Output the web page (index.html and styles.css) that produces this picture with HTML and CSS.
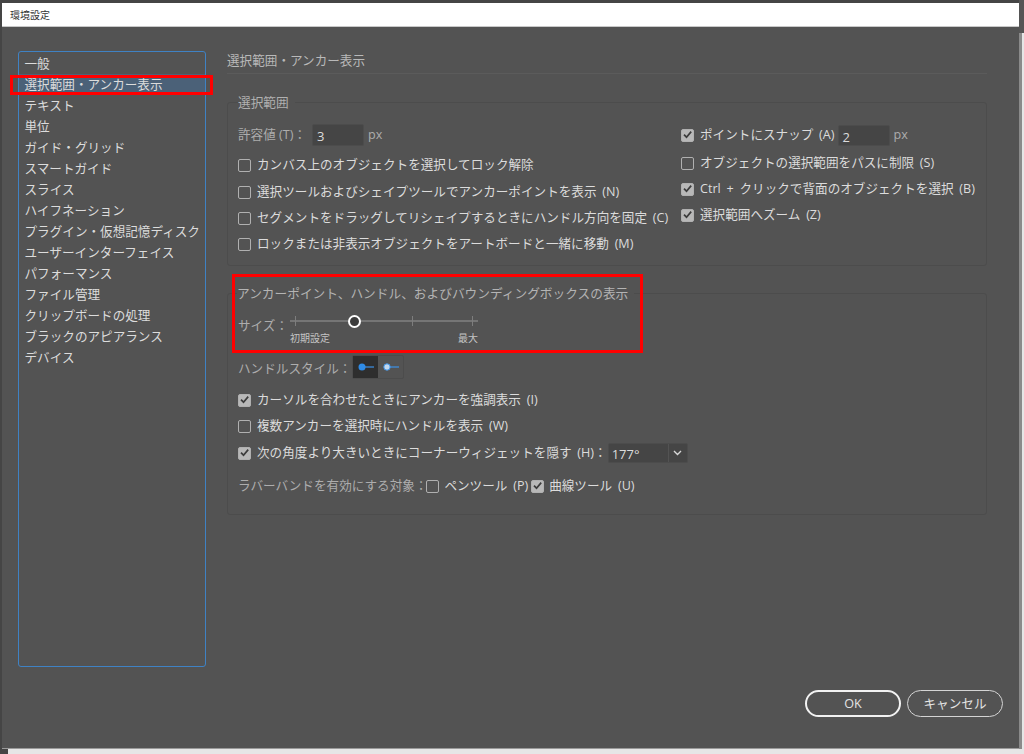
FILE: index.html
```html
<!DOCTYPE html>
<html lang="ja">
<head>
<meta charset="utf-8">
<title>環境設定</title>
<link rel="stylesheet" href="styles.css">
</head>
<body>
<svg class="defs" width="0" height="0" aria-hidden="true"><defs>
<symbol id="tick" viewBox="0 0 13 13"><path d="M3 6.7 5.5 9.2 10.2 3.6" fill="none" stroke="#3c3c3c" stroke-width="1.7"/></symbol>
</defs></svg>
<div class="desk">
  <div class="window">
    <div class="titlebar">環境設定</div>
    <div class="content">
      <div class="top">
        <ul class="sidebar">
          <li>一般</li>
          <li class="selected">選択範囲・アンカー表示</li>
          <li>テキスト</li>
          <li>単位</li>
          <li>ガイド・グリッド</li>
          <li>スマートガイド</li>
          <li>スライス</li>
          <li>ハイフネーション</li>
          <li>プラグイン・仮想記憶ディスク</li>
          <li>ユーザーインターフェイス</li>
          <li>パフォーマンス</li>
          <li>ファイル管理</li>
          <li>クリップボードの処理</li>
          <li>ブラックのアピアランス</li>
          <li>デバイス</li>
        </ul>
        <div class="main">
          <div class="heading">選択範囲・アンカー表示</div>
          <section class="group first">
            <div class="legend">選択範囲</div>
            <div class="columns">
              <div class="col-left">
                <div class="row field-row">
                  <span class="dim tol-label">許容値 (T)：</span>
                  <span class="input tol">3</span>
                  <span class="dim unit">px</span>
                </div>
                <div class="row gap6"><span class="box"></span><span>カンバス上のオブジェクトを選択してロック解除</span></div>
                <div class="row gap1"><span class="box"></span><span>選択ツールおよびシェイプツールでアンカーポイントを表示 (N)</span></div>
                <div class="row"><span class="box"></span><span>セグメントをドラッグしてリシェイプするときにハンドル方向を固定 (C)</span></div>
                <div class="row"><span class="box"></span><span>ロックまたは非表示オブジェクトをアートボードと一緒に移動 (M)</span></div>
              </div>
              <div class="col-right">
                <div class="row field-row"><span class="box on"><svg><use href="#tick"/></svg></span><span>ポイントにスナップ (A)</span><span class="input snap">2</span><span class="dim unit">px</span></div>
                <div class="row gap4"><span class="box"></span><span>オブジェクトの選択範囲をパスに制限 (S)</span></div>
                <div class="row"><span class="box on"><svg><use href="#tick"/></svg></span><span>Ctrl + クリックで背面のオブジェクトを選択 (B)</span></div>
                <div class="row"><span class="box on"><svg><use href="#tick"/></svg></span><span>選択範囲へズーム (Z)</span></div>
              </div>
            </div>
          </section>
          <section class="group second">
            <div class="legend">アンカーポイント、ハンドル、およびバウンディングボックスの表示</div>
            <div class="size-row">
              <span class="dim size-label">サイズ：</span>
              <div class="slider">
                <div class="track">
                  <i class="tick t1"></i><i class="tick t2"></i><i class="tick t3"></i>
                  <i class="thumb"></i>
                </div>
                <div class="scale"><span>初期設定</span><span>最大</span></div>
              </div>
            </div>
            <div class="handle-row">
              <span class="dim">ハンドルスタイル：</span>
              <div class="seg">
                <span class="seg-btn active"><svg width="16" height="8" viewBox="0 0 16 8"><circle cx="4" cy="4" r="3.5" fill="#2f8be6"/><path d="M7 4h9" stroke="#3d93e8" stroke-width="1.2"/></svg></span>
                <span class="seg-btn"><svg width="16" height="8" viewBox="0 0 16 8"><circle cx="4" cy="4" r="3.2" fill="#c3d8ee" stroke="#3d93e8"/><path d="M7 4h9" stroke="#3d93e8" stroke-width="1.2"/></svg></span>
              </div>
            </div>
            <div class="row r-hover"><span class="box on"><svg><use href="#tick"/></svg></span><span>カーソルを合わせたときにアンカーを強調表示 (I)</span></div>
            <div class="row"><span class="box"></span><span>複数アンカーを選択時にハンドルを表示 (W)</span></div>
            <div class="row r-angle"><span class="box on"><svg><use href="#tick"/></svg></span><span>次の角度より大きいときにコーナーウィジェットを隠す (H)：</span>
              <span class="combo"><span class="combo-val">177°</span><span class="combo-arrow"><svg width="9" height="6" viewBox="0 0 9 6"><path d="M1 1l3.5 3.5L8 1" fill="none" stroke="#d8d8d8" stroke-width="1.4"/></svg></span></span>
            </div>
            <div class="row r-rubber">
              <span class="dim rubber-label">ラバーバンドを有効にする対象：</span>
              <span class="box tight"></span><span class="pen">ペンツール (P)</span>
              <span class="box on tight"><svg><use href="#tick"/></svg></span><span>曲線ツール (U)</span>
            </div>
          </section>
        </div>
      </div>
      <div class="actions">
        <button class="btn primary">OK</button>
        <button class="btn">キャンセル</button>
      </div>
      <div class="mark mark-a"></div>
      <div class="mark mark-b"></div>
    </div>
  </div>
  <div class="edge"><div class="edge-top"></div><div class="edge-low"></div></div>
</div>
<div class="foot"><div class="foot-dark"></div></div>
</body>
</html>
```
FILE: styles.css
```css
* { box-sizing: border-box; }
html, body { margin: 0; padding: 0; }
body {
  width: 1024px;
  height: 754px;
  overflow: hidden;
  background: #e6e6e6;
  font-family: "Open Sans", "Noto Sans CJK JP", sans-serif;
  font-size: 12.6px;
  color: #dcdcdc;
}
.defs { position: absolute; }
.desk { display: flex; height: 749px; padding-left: 2px; background: #454545; }
.window {
  width: 1017px;
  margin-top: 3px;
  display: flex;
  flex-direction: column;
  background: #535353;
  border-bottom: 1px solid #9a9a9a;
}
.titlebar {
  height: 24px;
  flex: none;
  padding-left: 8px;
  background: #fff;
  border-bottom: 1px solid #c8c8c8;
  color: #333;
  font-size: 10px;
  line-height: 24px;
}
.content { position: relative; flex: 1; display: flex; flex-direction: column; }
.top { display: flex; padding: 24px 0 0 16px; }
.sidebar {
  list-style: none;
  width: 188px;
  height: 616px;
  margin: 0;
  padding: 1px 0 0;
  border: 1.5px solid #3f82c4;
  border-radius: 3px;
  flex: none;
}
.sidebar li { height: 21px; padding-left: 5.5px; line-height: 22px; white-space: nowrap; }
.sidebar .selected { background: #4b6178; }
.main { width: 760px; margin-left: 21px; }
.heading {
  height: 23px;
  line-height: 20px;
  color: #b9b9b9;
  border-bottom: 1px solid #5b5b5b;
}
.group { border: 1px solid #4c4c4c; border-radius: 3px; padding: 0 0 0 10px; }
.first { height: 164px; margin-top: 28px; }
.second { height: 222px; margin-top: 27px; }
.legend {
  width: fit-content;
  height: 18px;
  margin-top: -9px;
  padding-right: 6px;
  background: #535353;
  font-size: 12.7px;
  line-height: 16px;
  color: #b0b0b0;
}
.second .legend { margin-left: -1px; line-height: 17px; color: #b4b4b4; }
.columns { display: flex; margin-top: 12px; }
.col-left { width: 443px; flex: none; }
.row { display: flex; align-items: center; height: 26px; white-space: nowrap; line-height: 22px; word-spacing: 2.5px; }
.field-row { height: 22px; }
.gap6 { margin-top: 6px; }
.gap4 { margin-top: 4px; }
.gap1 { margin-top: 1px; }
.dim { color: #adadad; }
.unit { margin-left: 4px; }
.tol-label { width: 74px; flex: none; word-spacing: 0; }
.box {
  width: 13px;
  height: 13px;
  flex: none;
  margin: 0 6px 0 0;
  border: 1.5px solid #b0b0b0;
  border-radius: 2px;
  display: block;
}
.box.tight { margin-right: 5px; }
.box.on { background: #b8b8b8; }
.box svg { display: block; width: 13px; height: 13px; margin: -1.5px; }
.input {
  display: block;
  height: 22px;
  background: #454545;
  border: 1px solid #4c4c4c;
  border-radius: 2px;
  padding-left: 4px;
  line-height: 23px;
  font-size: 13px;
}
.tol { width: 52px; }
.snap { width: 52px; height: 21px; margin-left: 3px; }
.size-row { display: flex; margin-top: 10px; height: 39px; }
.size-label { width: 52px; flex: none; line-height: 20px; margin-top: 3px; }
.slider { width: 188px; }
.track { position: relative; height: 2px; margin-top: 7px; background: #757575; }
.tick { position: absolute; top: -4px; width: 1px; height: 10px; background: #7d7d7d; }
.t1 { left: 5px; }
.t2 { left: 122px; }
.t3 { left: 182px; }
.thumb {
  position: absolute;
  left: 58px;
  top: -5px;
  width: 13px;
  height: 13px;
  border: 2.5px solid #fff;
  border-radius: 50%;
  background: #3c3c3c;
}
.scale { display: flex; justify-content: space-between; margin-top: 9px; font-size: 10px; color: #c4c4c4; line-height: 14px; }
.handle-row { display: flex; align-items: center; height: 24px; margin-top: 3px; }
.seg { display: flex; margin-left: 1px; border: 1px solid #4c4c4c; border-radius: 2px; height: 24px; }
.seg-btn { width: 25px; display: flex; align-items: center; justify-content: center; }
.seg-btn.active { background: #2e2e2e; }
.r-hover { margin-top: 8px; }
.r-angle { height: 30px; margin-top: -1px; }
.combo { display: flex; width: 80px; height: 20px; margin-left: 1px; background: #454545; border: 1px solid #4c4c4c; border-radius: 2px; }
.combo-val { width: 60px; padding-left: 3px; line-height: 20px; font-size: 13px; border-right: 1px solid #535353; }
.combo-arrow { flex: 1; display: flex; align-items: center; justify-content: center; }
.r-rubber { margin-top: 5px; }
.rubber-label { margin-right: -1px; }
.pen { margin-right: 3px; }
.actions { display: flex; justify-content: flex-end; gap: 6px; margin-top: 23px; padding-right: 16px; }
.btn {
  width: 96px;
  height: 27px;
  padding: 0;
  background: transparent;
  border: 1.5px solid #d4d4d4;
  border-radius: 14px;
  color: #e4e4e4;
  font: inherit;
  line-height: 22px;
}
.btn.primary { border: 2.5px solid #f2f2f2; }
.mark { position: absolute; border: 3px solid #f00; }
.mark-a { left: 8px; top: 48px; width: 203px; height: 20px; }
.mark-b { left: 230px; top: 247px; width: 411px; height: 79px; }
.edge { flex: 1; display: flex; flex-direction: column; }
.edge-top { height: 33px; background: #555; }
.edge-low { flex: 1; background: #e6e6e6; border-left: 3px solid #8a8a8a; }
.foot { height: 5px; }
.foot-dark { width: 8px; height: 5px; background: #454545; }
```
